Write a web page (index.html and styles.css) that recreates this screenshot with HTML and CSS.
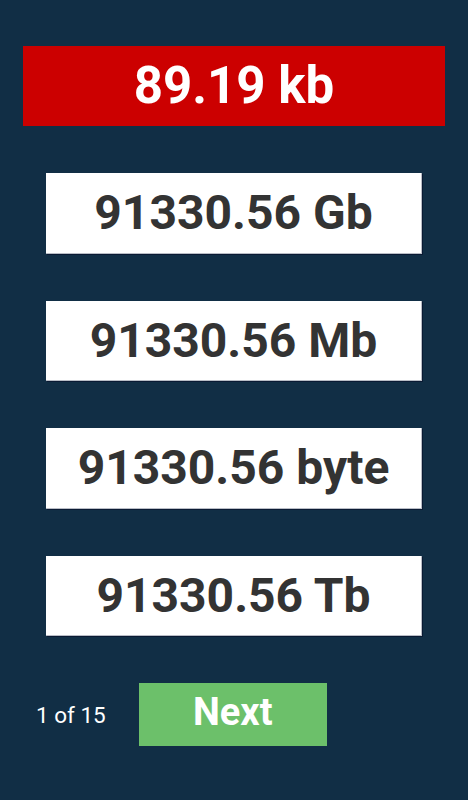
FILE: index.html
```html
<!DOCTYPE html>
<html>
<head>
<meta charset="utf-8">
<link rel="stylesheet" href="styles.css">
</head>
<body>
<main class="screen">
  <div class="question">89.19 kb</div>
  <div class="options">
    <div class="option">91330.56 Gb</div>
    <div class="option">91330.56 Mb</div>
    <div class="option">91330.56 byte</div>
    <div class="option">91330.56 Tb</div>
  </div>
  <div class="footer">
    <span class="progress">1 of 15</span>
    <button class="next">Next</button>
  </div>
</main>
</body>
</html>
```
FILE: styles.css
```css
html, body {
  margin: 0;
  padding: 0;
  background: #112e45;
}
.screen {
  width: 468px;
  height: 800px;
  box-sizing: border-box;
  padding-top: 46px;
  display: flex;
  flex-direction: column;
  align-items: center;
  font-family: Roboto, "Liberation Sans", sans-serif;
}
.question {
  width: 422px;
  height: 80px;
  background: #cc0000;
  color: #ffffff;
  font-weight: 700;
  font-size: 51px;
  display: flex;
  align-items: center;
  justify-content: center;
  padding-bottom: 2px;
  box-sizing: border-box;
}
.options {
  margin-top: 47px;
  display: flex;
  flex-direction: column;
  gap: 47px;
}
.option {
  width: 376px;
  height: 80.5px;
  box-sizing: border-box;
  background: #ffffff;
  color: #333333;
  font-weight: 700;
  font-size: 48px;
  display: flex;
  align-items: center;
  justify-content: center;
  box-shadow: 1px 1px 0 #0a1a33;
  border-right: 1px solid #b9bdc6;
  border-bottom: 1px solid #b9bdc6;
}
.footer {
  margin-top: 47px;
  width: 100%;
  box-sizing: border-box;
  padding-left: 36px;
  display: flex;
  align-items: center;
  gap: 33px;
}
.progress {
  color: #ffffff;
  font-size: 22.5px;
}
.next {
  width: 188px;
  height: 63px;
  border: none;
  background: #6cc06a;
  color: #ffffff;
  font-family: Roboto, "Liberation Sans", sans-serif;
  font-weight: 700;
  font-size: 38px;
  padding: 0 0 6px 0;
}
```
